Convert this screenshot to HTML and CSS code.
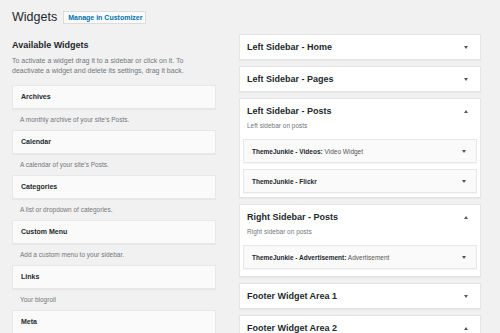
FILE: index.html
```html
<!DOCTYPE html>
<html>
<head>
<meta charset="utf-8">
<link rel="stylesheet" href="styles.css">
</head>
<body>
<div class="wrap">
  <div class="page-head">
    <h1 class="page-title">Widgets</h1>
    <a class="btn-customize">Manage in Customizer</a>
  </div>
  <div class="columns">
    <div class="available">
      <h2 class="avail-title">Available Widgets</h2>
      <p class="avail-desc">To activate a widget drag it to a sidebar or click on it. To<br>deactivate a widget and delete its settings, drag it back.</p>
      <div class="widget-list">
        <div class="widget"><div class="widget-top">Archives</div><div class="widget-desc">A monthly archive of your site’s Posts.</div></div>
        <div class="widget"><div class="widget-top">Calendar</div><div class="widget-desc">A calendar of your site’s Posts.</div></div>
        <div class="widget"><div class="widget-top">Categories</div><div class="widget-desc">A list or dropdown of categories.</div></div>
        <div class="widget"><div class="widget-top">Custom Menu</div><div class="widget-desc">Add a custom menu to your sidebar.</div></div>
        <div class="widget"><div class="widget-top">Links</div><div class="widget-desc">Your blogroll</div></div>
        <div class="widget"><div class="widget-top">Meta</div></div>
      </div>
    </div>
    <div class="sidebars">
      <div class="sidebar">
        <div class="sidebar-head"><span>Left Sidebar - Home</span><i class="arrow down"></i></div>
      </div>
      <div class="sidebar">
        <div class="sidebar-head"><span>Left Sidebar - Pages</span><i class="arrow down"></i></div>
      </div>
      <div class="sidebar open">
        <div class="sidebar-head"><span>Left Sidebar - Posts</span><i class="arrow up"></i></div>
        <div class="sidebar-desc">Left sidebar on posts</div>
        <div class="inner-widget"><span><b>ThemeJunkie - Videos:</b> Video Widget</span><i class="arrow down"></i></div>
        <div class="inner-widget"><span><b>ThemeJunkie - Flickr</b></span><i class="arrow down"></i></div>
      </div>
      <div class="sidebar open tall">
        <div class="sidebar-head"><span>Right Sidebar - Posts</span><i class="arrow up"></i></div>
        <div class="sidebar-desc">Right sidebar on posts</div>
        <div class="inner-widget"><span><b>ThemeJunkie - Advertisement:</b> Advertisement</span><i class="arrow down"></i></div>
      </div>
      <div class="sidebar">
        <div class="sidebar-head"><span>Footer Widget Area 1</span><i class="arrow down"></i></div>
      </div>
      <div class="sidebar">
        <div class="sidebar-head"><span>Footer Widget Area 2</span><i class="arrow up"></i></div>
      </div>
    </div>
  </div>
</div>
</body>
</html>
```
FILE: styles.css
```css
html, body {
  margin: 0;
  padding: 0;
  background: #f1f1f1;
  font-family: "Liberation Sans", Arial, sans-serif;
  color: #23282d;
  overflow: hidden;
  height: 333px;
}
.wrap {
  padding: 0 19px 0 12px;
}
.page-head {
  display: flex;
  align-items: center;
  gap: 6px;
  padding-top: 7px;
  height: 20px;
  margin-bottom: 7px;
}
.page-title {
  margin: 0;
  font-size: 12.5px;
  font-weight: normal;
  line-height: 20px;
  color: #23282d;
}
.btn-customize {
  display: inline-block;
  height: 11px;
  line-height: 11px;
  padding: 0 3px 0 4px;
  border: 1px solid #dcdcdc;
  background: #fafafa;
  color: #0073aa;
  font-size: 7px;
  font-weight: bold;
}
.columns {
  display: grid;
  grid-template-columns: 204px 242px;
  column-gap: 23px;
  align-items: start;
}
.avail-title {
  margin: 5px 0 0;
  font-size: 9px;
  line-height: 12px;
  font-weight: bold;
}
.avail-desc {
  margin: 5px 0 9px;
  font-size: 7px;
  line-height: 10px;
  color: #72777c;
}
.widget-top {
  height: 22px;
  line-height: 22px;
  padding-left: 8px;
  background: #fafafa;
  border: 1px solid #e8e8e8;
  box-shadow: 0 1px 1px rgba(0,0,0,0.04);
  font-size: 7px;
  font-weight: bold;
  color: #23282d;
}
.widget-desc {
  height: 21px;
  line-height: 21px;
  padding-left: 8px;
  font-size: 6.5px;
  color: #72777c;
}
.sidebars {
  display: flex;
  flex-direction: column;
  gap: 6px;
}
.sidebar {
  background: #fff;
  border: 1px solid #e5e5e5;
  box-shadow: 0 1px 1px rgba(0,0,0,0.04);
}
.sidebar.open {
  padding-bottom: 4px;
}
.sidebar.tall {
  padding-bottom: 7px;
}
.sidebar-head {
  display: flex;
  justify-content: space-between;
  align-items: center;
  height: 24px;
  padding: 0 12px 0 7px;
  font-size: 9px;
  font-weight: bold;
}
.sidebar-desc {
  margin-top: -2px;
  padding-left: 7px;
  font-size: 6.5px;
  line-height: 10px;
  color: #72777c;
  margin-bottom: 8px;
}
.inner-widget {
  display: flex;
  justify-content: space-between;
  align-items: center;
  height: 22px;
  margin: 0 3px 6px 3px;
  padding: 0 10px 0 8px;
  background: #fafafa;
  border: 1px solid #e8e8e8;
  box-shadow: 0 1px 1px rgba(0,0,0,0.04);
  font-size: 6.5px;
  color: #555;
}
.inner-widget:last-child {
  margin-bottom: 0;
}
.inner-widget b {
  color: #23282d;
}
.arrow {
  display: block;
  width: 0;
  height: 0;
  border-left: 2px solid transparent;
  border-right: 2px solid transparent;
}
.arrow.down {
  border-top: 3px solid #555;
}
.arrow.up {
  border-bottom: 3px solid #555;
}
```
